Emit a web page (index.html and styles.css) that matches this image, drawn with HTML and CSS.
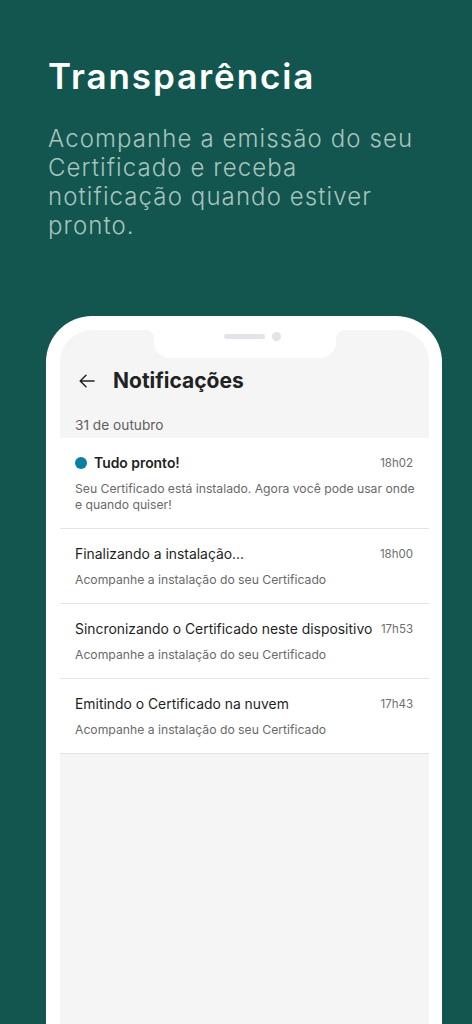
FILE: index.html
```html
<!DOCTYPE html>
<html lang="pt-BR">
<head>
<meta charset="utf-8">
<title>Transparência</title>
<link rel="stylesheet" href="styles.css">
</head>
<body>
<div class="page">
  <section class="hero">
    <h1 class="hero-title">Transparência</h1>
    <p class="hero-text">Acompanhe a emissão do seu Certificado e receba notificação quando estiver pronto.</p>
  </section>

  <div class="phone">
    <div class="notch">
      <span class="speaker"></span>
      <span class="camera"></span>
    </div>
    <div class="screen">
      <header class="app-header">
        <svg class="back" width="16" height="14" viewBox="0 0 16 14" aria-hidden="true">
          <path d="M15 7H1.5M7 1.2L1.2 7L7 12.8" fill="none" stroke="#222" stroke-width="1.5" stroke-linecap="round" stroke-linejoin="round"/>
        </svg>
        <h2 class="app-title">Notificações</h2>
      </header>
      <div class="date">31 de outubro</div>
      <ul class="list">
        <li class="item">
          <div class="item-head">
            <span class="item-title strong"><span class="dot"></span>Tudo pronto!</span>
            <span class="time">18h02</span>
          </div>
          <p class="desc">Seu Certificado está instalado. Agora você pode usar onde e quando quiser!</p>
        </li>
        <li class="item">
          <div class="item-head">
            <span class="item-title">Finalizando a instalação...</span>
            <span class="time">18h00</span>
          </div>
          <p class="desc">Acompanhe a instalação do seu Certificado</p>
        </li>
        <li class="item">
          <div class="item-head">
            <span class="item-title">Sincronizando o Certificado neste dispositivo</span>
            <span class="time">17h53</span>
          </div>
          <p class="desc">Acompanhe a instalação do seu Certificado</p>
        </li>
        <li class="item">
          <div class="item-head">
            <span class="item-title">Emitindo o Certificado na nuvem</span>
            <span class="time">17h43</span>
          </div>
          <p class="desc">Acompanhe a instalação do seu Certificado</p>
        </li>
      </ul>
    </div>
  </div>
</div>
</body>
</html>
```

FILE: styles.css
```css
* { box-sizing: border-box; }

html, body {
  margin: 0;
  padding: 0;
  background: #13564f;
}

body {
  font-family: Inter, "Open Sans", "Liberation Sans", sans-serif;
  color: #222;
}

.page {
  width: 472px;
  height: 1024px;
  overflow: hidden;
  background: #13564f;
}

.hero {
  padding: 55px 0 0 48px;
}

.hero-title {
  margin: 0;
  font-size: 35px;
  line-height: 42px;
  font-weight: 600;
  color: #ffffff;
  letter-spacing: 1.9px;
}

.hero-text {
  width: 372px;
  margin: 27px 0 0;
  font-size: 24px;
  line-height: 29px;
  font-weight: 300;
  color: #a8c4be;
  letter-spacing: 1.1px;
}

.phone {
  position: relative;
  width: 396px;
  height: 760px;
  margin: 76px 0 0 46px;
  background: #ffffff;
  border-style: solid;
  border-color: #ffffff;
  border-width: 14px 13px 0 14px;
  border-radius: 46px 46px 0 0;
}

.screen {
  height: 100%;
  background: #f5f5f5;
  border-radius: 32px 32px 0 0;
  padding-top: 31px;
  overflow: hidden;
}

.notch {
  position: absolute;
  top: 0;
  left: 50%;
  transform: translateX(-50%);
  width: 182px;
  height: 28px;
  background: #ffffff;
  border-radius: 0 0 16px 16px;
  display: flex;
  align-items: flex-start;
  justify-content: center;
  gap: 7px;
  padding: 2px 0 0 16px;
  z-index: 2;
}

.notch::before,
.notch::after {
  content: "";
  position: absolute;
  top: 0;
  width: 8px;
  height: 8px;
}

.notch::before {
  left: -8px;
  background: radial-gradient(circle at 0 8px, transparent 7.5px, #ffffff 8px);
}

.notch::after {
  right: -8px;
  background: radial-gradient(circle at 8px 8px, transparent 7.5px, #ffffff 8px);
}

.speaker {
  width: 41px;
  height: 5px;
  margin-top: 2px;
  border-radius: 3px;
  background: #e3e3ea;
}

.camera {
  width: 9px;
  height: 9px;
  border-radius: 50%;
  background: #e3e3ea;
}

.app-header {
  display: flex;
  align-items: center;
  height: 40px;
  padding-left: 19px;
}

.back {
  flex: none;
}

.app-title {
  margin: 0 0 0 18px;
  font-size: 21px;
  line-height: 28px;
  font-weight: 700;
  color: #222;
}

.date {
  margin-top: 11px;
  height: 26px;
  padding-left: 15px;
  font-size: 13.7px;
  line-height: 26px;
  color: #5f5f5f;
}

.list {
  list-style: none;
  margin: 0;
  padding: 0;
  background: #ffffff;
}

.item {
  padding: 15px 16px 15px 15px;
  border-bottom: 1px solid #e4e4e4;
}

.item-head {
  display: flex;
  align-items: flex-start;
  justify-content: space-between;
  gap: 8px;
}

.item-title {
  display: flex;
  align-items: center;
  white-space: nowrap;
  font-size: 13.9px;
  line-height: 20px;
  color: #1f1f1f;
}

.item-title.strong {
  font-weight: 600;
}

.dot {
  width: 12px;
  height: 12px;
  border-radius: 50%;
  background: #0a7fa2;
  margin-right: 7px;
}

.time {
  flex: none;
  font-size: 11.5px;
  line-height: 20px;
  color: #6e6e6e;
}

.desc {
  margin: 8px -4px 0 0;
  font-size: 12.2px;
  line-height: 16px;
  color: #6a6a6a;
}
```
